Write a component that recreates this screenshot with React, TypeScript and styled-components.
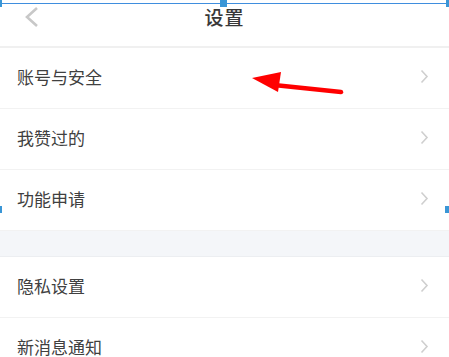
import React from 'react';
import styled, { createGlobalStyle } from 'styled-components';

const GlobalStyle = createGlobalStyle`
  html, body {
    margin: 0;
    padding: 0;
    background: #fff;
    font-family: "Noto Sans CJK SC", "Noto Sans", sans-serif;
  }
`

const Page = styled.div`
  position: relative;
  width: 449px;
  height: 357px;
  overflow: hidden;
  background: #fff;
`

const Header = styled.div`
  display: flex;
  align-items: center;
  justify-content: center;
  position: relative;
  height: 48px;
  padding-bottom: 14px;
  box-sizing: border-box;
  border-bottom: 2px solid #f0f0f0;
`

const Back = styled.div`
  position: absolute;
  left: 24px;
  top: 6px;
  display: flex;
`

const Title = styled.div`
  font-size: 19px;
  font-weight: 500;
  color: #383838;
  letter-spacing: 1px;
`

const Row = styled.div`
  display: flex;
  align-items: center;
  justify-content: space-between;
  height: 61px;
  box-sizing: border-box;
  padding: 0 20px 4px 17px;
  border-bottom: 1px solid #f2f2f2;
`

const Label = styled.span`
  font-size: 17px;
  color: #404040;
`

const Gap = styled.div`
  height: 26px;
  box-sizing: border-box;
  background: #f4f6f9;
  border-bottom: 1px solid #eceef1;
`

const SelLine = styled.div`
  position: absolute;
  left: 0;
  right: 0;
  top: 3px;
  height: 1px;
  background: #3f8ede;
`

const Handle = styled.div<{ $x: number; $y: number; $w: number; $h: number }>`
  position: absolute;
  left: ${p => p.$x}px;
  top: ${p => p.$y}px;
  width: ${p => p.$w}px;
  height: ${p => p.$h}px;
  background: #3a96d6;
`

const Arrow = styled.svg`
  position: absolute;
  left: 248px;
  top: 68px;
`

const Chevron = () => (
  <svg width="9" height="15" viewBox="0 0 9 15">
    <path d="M1.5 1.5 L7 7.5 L1.5 13.5" fill="none" stroke="#cfcfcf" strokeWidth="1.6" />
  </svg>
)

const Item = ({ label }: { label: string }) => (
  <Row>
    <Label>{label}</Label>
    <Chevron />
  </Row>
)

export default function App() {
  return (
    <Page>
      <GlobalStyle />
      <Header>
        <Back>
          <svg width="16" height="22" viewBox="0 0 16 22">
            <path d="M13 2 L3 11 L13 20" fill="none" stroke="#c8c8c8" strokeWidth="2.6" />
          </svg>
        </Back>
        <Title>设置</Title>
      </Header>
      <Item label="账号与安全" />
      <Item label="我赞过的" />
      <Item label="功能申请" />
      <Gap />
      <Item label="隐私设置" />
      <Item label="新消息通知" />

      <Arrow width="100" height="30" viewBox="0 0 100 30">
        <path d="M26 17 L93 24" stroke="#f00" strokeWidth="4.5" strokeLinecap="round" />
        <path d="M4 10 L33 4 L30 24 Z" fill="#f00" />
      </Arrow>

      <SelLine />
      <Handle $x={0} $y={0} $w={2} $h={7} />
      <Handle $x={220} $y={0} $w={7} $h={7} />
      <Handle $x={446} $y={0} $w={3} $h={7} />
      <Handle $x={0} $y={206} $w={2} $h={7} />
      <Handle $x={445} $y={206} $w={4} $h={7} />
    </Page>
  )
}
